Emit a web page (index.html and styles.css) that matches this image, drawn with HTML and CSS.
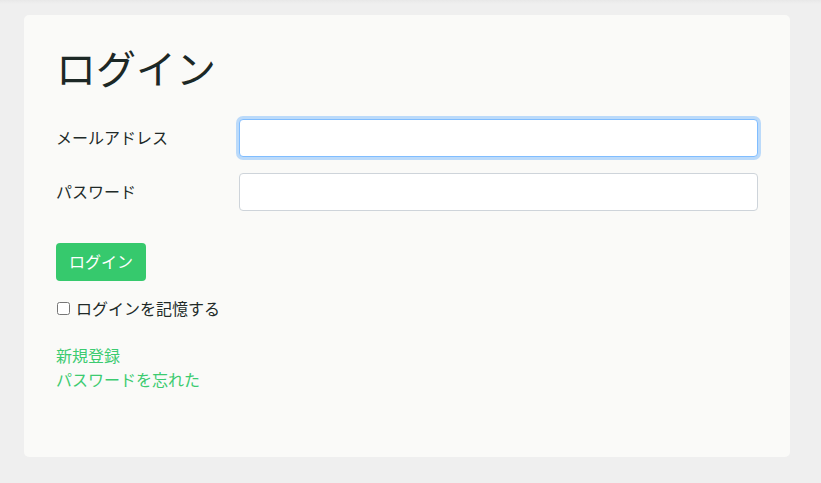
FILE: index.html
```html
<!DOCTYPE html>
<html lang="ja">
<head>
<meta charset="utf-8">
<title>ログイン</title>
<link rel="stylesheet" href="styles.css">
</head>
<body>
<div class="topbar"></div>
<main class="card">
  <h1 class="title">ログイン</h1>
  <form class="form">
    <div class="row">
      <label class="label" for="email">メールアドレス</label>
      <input class="input focused" id="email" type="email">
    </div>
    <div class="row">
      <label class="label" for="password">パスワード</label>
      <input class="input" id="password" type="password">
    </div>
    <button class="btn" type="button">ログイン</button>
    <label class="check"><input type="checkbox" class="checkbox"> ログインを記憶する</label>
  </form>
  <div class="links">
    <a href="#" class="link">新規登録</a>
    <a href="#" class="link">パスワードを忘れた</a>
  </div>
</main>
</body>
</html>
```
FILE: styles.css
```css
* { box-sizing: border-box; }
html, body { margin: 0; padding: 0; }
body {
  background: #efefef;
  font-family: "Noto Sans CJK JP", "Noto Sans", sans-serif;
  font-size: 16px;
  line-height: 1.5;
  color: #212a28;
  width: 821px;
  height: 483px;
  overflow: hidden;
}
.topbar {
  height: 4px;
  background: linear-gradient(#e8e8e8, #efefef);
}
.card {
  margin: 11px 0 0 24px;
  width: 766px;
  height: 442px;
  background: #fafaf8;
  border-radius: 5px;
  padding: 32px;
}
.title {
  margin: -4px 0 28px;
  font-size: 40px;
  font-weight: 400;
  line-height: 48px;
  color: #1c2826;
}
.form { display: flex; flex-direction: column; align-items: flex-start; }
.row {
  display: flex;
  align-items: center;
  width: 100%;
  margin-bottom: 16px;
}
.label {
  width: 183px;
  flex: none;
  font-size: 16px;
  padding-bottom: 3px;
}
.input {
  width: 519px;
  height: 38px;
  border: 1px solid #ced4da;
  border-radius: 4px;
  background: #fff;
  padding: 6px 12px;
  font: inherit;
  outline: none;
}
.input.focused {
  border-color: #80bdff;
  box-shadow: 0 0 0 3px rgba(0, 123, 255, 0.25);
}
.btn {
  margin-top: 16px;
  height: 38px;
  width: 90px;
  border: none;
  border-radius: 4px;
  background: #36c96d;
  color: #fff;
  font: inherit;
  font-size: 16px;
  padding: 0 0 2px;
  cursor: pointer;
}
.check {
  display: flex;
  align-items: center;
  margin-top: 15px;
  height: 24px;
  font-size: 16px;
  gap: 6px;
}
.checkbox {
  margin: 0 0 0 1px;
  width: 13px;
  height: 13px;
}
.links {
  display: flex;
  flex-direction: column;
  margin-top: 23px;
}
.link {
  color: #3ccb70;
  text-decoration: none;
  line-height: 24px;
  align-self: flex-start;
}
```
